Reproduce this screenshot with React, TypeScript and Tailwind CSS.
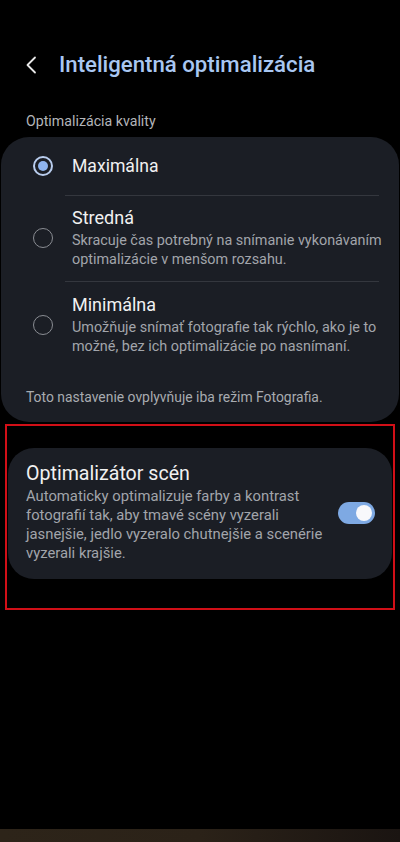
import React from "react";

function Radio({ checked }: { checked: boolean }) {
  return checked ? (
    <div className="w-[20px] h-[20px] rounded-full border-[2px] border-[#b9cdee] flex items-center justify-center shrink-0">
      <div className="w-[10px] h-[10px] rounded-full bg-[#8fb4ee]" />
    </div>
  ) : (
    <div className="w-[20px] h-[20px] rounded-full border-[1.5px] border-[#8a8d93] shrink-0" />
  );
}

export default function App() {
  return (
    <div
      className="w-[400px] h-[842px] bg-black flex flex-col overflow-hidden"
      style={{ fontFamily: "Roboto, 'Noto Sans', sans-serif" }}
    >
      <div className="flex items-center h-[40px] mt-[45px] pl-[24px]">
        <svg width="16" height="20" viewBox="0 0 16 20" className="shrink-0">
          <path d="M11 2.5 L3.5 10 L11 17.5" fill="none" stroke="#e8e8e8" strokeWidth="1.8" strokeLinecap="round" strokeLinejoin="round" />
        </svg>
        <div className="ml-[19px] text-[22.2px] font-medium text-[#a9c7f2]">
          Inteligentná optimalizácia
        </div>
      </div>

      <div className="mt-[26px] pl-[26px] text-[14.2px] text-[#b3b5b9]">Optimalizácia kvality</div>

      <div className="mt-[5px] mx-[1px] bg-[#1b1e25] rounded-[28px] pt-[14px] pb-[15px]">
        <div className="flex items-center pl-[32px] h-[30px]">
          <Radio checked />
          <div className="ml-[19px] text-[17.6px] text-[#f1f1f1]">Maximálna</div>
        </div>
        <div className="ml-[64px] mr-[20px] h-px bg-[#34373e] mt-[14px]" />
        <div className="flex items-center pl-[32px] pt-[10px] pb-[12px]">
          <Radio checked={false} />
          <div className="ml-[19px] flex flex-col">
            <div className="text-[18px] text-[#f1f1f1] leading-[24px]">Stredná</div>
            <div className="text-[14.4px] text-[#a2a5ab] leading-[19px] mt-[1px]">
              Skracuje čas potrebný na snímanie vykonávaním optimalizácie v menšom rozsahu.
            </div>
          </div>
        </div>
        <div className="ml-[64px] mr-[20px] h-px bg-[#34373e]" />
        <div className="flex items-center pl-[32px] pt-[11px] pb-[12px]">
          <Radio checked={false} />
          <div className="ml-[19px] flex flex-col pr-[8px]">
            <div className="text-[18px] text-[#f1f1f1] leading-[24px]">Minimálna</div>
            <div className="text-[14.4px] text-[#a2a5ab] leading-[19px] mt-[1px]">
              Umožňuje snímať fotografie tak rýchlo, ako je to možné, bez ich optimalizácie po nasnímaní.
            </div>
          </div>
        </div>
        <div className="pl-[25px] mt-[19px] text-[13.9px] leading-[20px] text-[#a8abb0]">
          Toto nastavenie ovplyvňuje iba režim Fotografia.
        </div>
      </div>

      <div className="mt-[2px] mx-[5px] h-[186px] border-[2px] border-[#d10f17] pt-[22px]">
        <div className="ml-[1px] mr-[1px] bg-[#1b1e25] rounded-[26px] flex items-center pl-[18px] pr-[17px] pt-[14px] pb-[16px]">
          <div className="flex-1 flex flex-col">
            <div className="text-[19.6px] text-[#f1f1f1] leading-[24px]">Optimalizátor scén</div>
            <div className="text-[14.8px] text-[#a2a5ab] leading-[19px] mt-[1px] max-w-[304px]">
              Automaticky optimalizuje farby a kontrast fotografií tak, aby tmavé scény vyzerali jasnejšie, jedlo vyzeralo chutnejšie a scenérie vyzerali krajšie.
            </div>
          </div>
          <div className="w-[37px] h-[22px] rounded-full bg-[#7ea9e3] flex items-center justify-end pr-[3px] shrink-0">
            <div className="w-[16px] h-[16px] rounded-full bg-[#f8f8fb]" />
          </div>
        </div>
      </div>

      <div className="flex-1" />
      <div className="h-[13px] bg-gradient-to-r from-[#2d2419] via-[#2b2218] to-[#1a1411]" />
    </div>
  );
}
